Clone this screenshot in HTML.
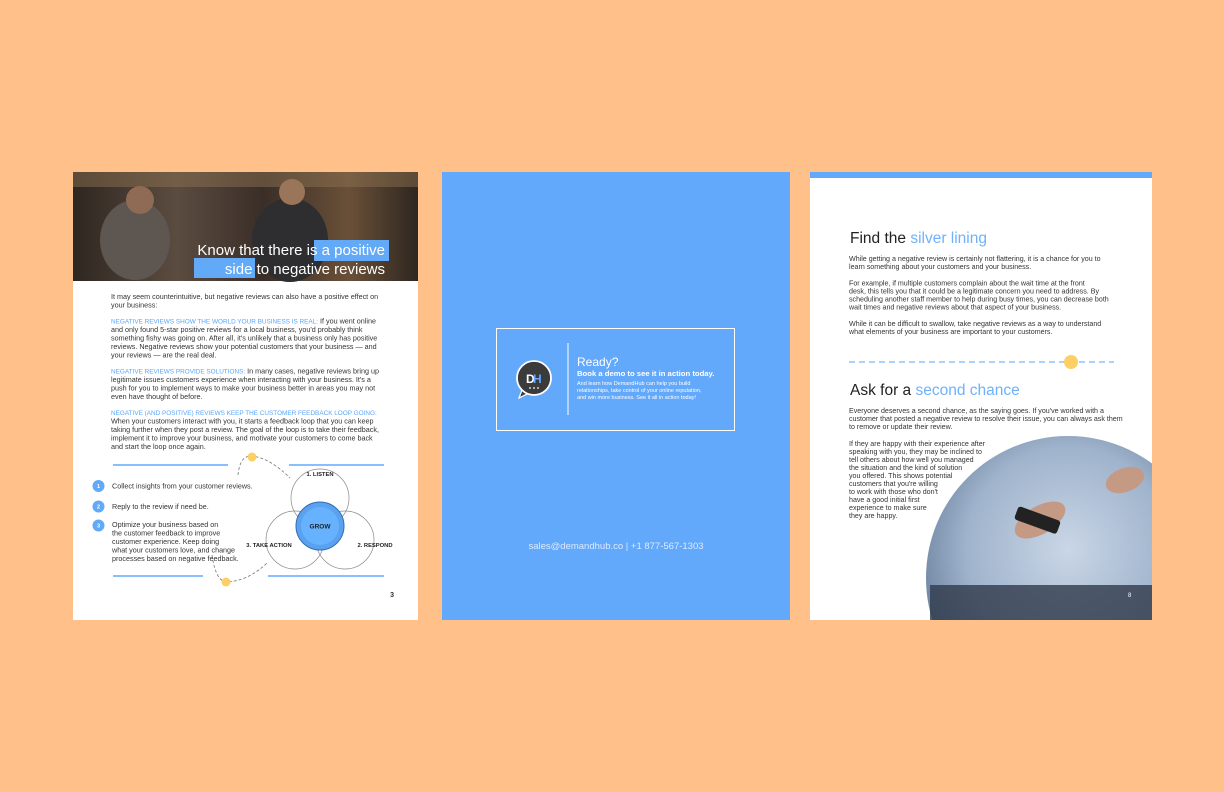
<!DOCTYPE html>
<html><head><meta charset="utf-8"><style>
html,body{margin:0;padding:0;background:#FFC08A;}
svg{display:block}
text{font-family:"Liberation Sans",sans-serif;}
.b{font-size:7.2px;fill:#333}
.r{font-size:7.1px;fill:#333}
.h{fill:#5aa6fb;font-size:6.4px}
</style></head><body>
<svg width="1224" height="792" viewBox="0 0 1224 792" xmlns="http://www.w3.org/2000/svg">
<defs>
<linearGradient id="ph" x1="0" y1="0" x2="1" y2="0">
<stop offset="0" stop-color="#2e2620"/><stop offset="0.3" stop-color="#5b4c40"/><stop offset="0.55" stop-color="#3a2e28"/><stop offset="0.8" stop-color="#6a5038"/><stop offset="1" stop-color="#2e2620"/></linearGradient>
<radialGradient id="hp" cx="0.5" cy="0.4" r="0.6"><stop offset="0" stop-color="#c9d6e6"/><stop offset="0.6" stop-color="#9fb3cc"/><stop offset="1" stop-color="#5f7593"/></radialGradient>
<clipPath id="rp"><rect x="810" y="172" width="342" height="448"/></clipPath>
</defs>
<rect x="0" y="0" width="1224" height="792" fill="#FFC08A"/>

<!-- LEFT PAGE -->
<rect x="73" y="172" width="345" height="448" fill="#fff"/>
<rect x="73" y="172" width="345" height="109" fill="url(#ph)"/>
<rect x="73" y="172" width="345" height="15" fill="#8a7050" opacity="0.5"/>
<ellipse cx="135" cy="240" rx="35" ry="40" fill="#5e5651"/>
<circle cx="140" cy="200" r="14" fill="#8f6a54"/>
<ellipse cx="290" cy="240" rx="38" ry="42" fill="#2e2e30"/>
<circle cx="292" cy="192" r="13" fill="#9a755a"/>
<rect x="314" y="240" width="75" height="21" fill="#62aaf8"/>
<rect x="194" y="258" width="61" height="20" fill="#62aaf8"/>
<text x="385" y="255" font-size="15" fill="#fff" text-anchor="end">Know that there is a positive</text>
<text x="385" y="274" font-size="15" fill="#fff" text-anchor="end">side to negative reviews</text>

<g class="b">
<text x="111" y="299">It may seem counterintuitive, but negative reviews can also have a positive effect on</text>
<text x="111" y="307.5">your business:</text>
<text x="111" y="323.5"><tspan class="h">NEGATIVE REVIEWS SHOW THE WORLD YOUR BUSINESS IS REAL:</tspan> If you went online</text>
<text x="111" y="332">and only found 5-star positive reviews for a local business, you'd probably think</text>
<text x="111" y="340.5">something fishy was going on. After all, it's unlikely that a business only has positive</text>
<text x="111" y="349">reviews. Negative reviews show your potential customers that your business — and</text>
<text x="111" y="357.5">your reviews — are the real deal.</text>
<text x="111" y="373.5"><tspan class="h">NEGATIVE REVIEWS PROVIDE SOLUTIONS:</tspan> In many cases, negative reviews bring up</text>
<text x="111" y="382">legitimate issues customers experience when interacting with your business. It's a</text>
<text x="111" y="390.5">push for you to implement ways to make your business better in areas you may not</text>
<text x="111" y="399">even have thought of before.</text>
<text x="111" y="415"><tspan class="h">NEGATIVE (AND POSITIVE) REVIEWS KEEP THE CUSTOMER FEEDBACK LOOP GOING:</tspan></text>
<text x="111" y="423.5">When your customers interact with you, it starts a feedback loop that you can keep</text>
<text x="111" y="432">taking further when they post a review. The goal of the loop is to take their feedback,</text>
<text x="111" y="440.5">implement it to improve your business, and motivate your customers to come back</text>
<text x="111" y="449">and start the loop once again.</text>
</g>

<line x1="113" y1="465" x2="228" y2="465" stroke="#62aaf8" stroke-width="1.5"/>
<line x1="289" y1="465" x2="384" y2="465" stroke="#62aaf8" stroke-width="1.5"/>
<line x1="113" y1="576" x2="203" y2="576" stroke="#62aaf8" stroke-width="1.5"/>
<line x1="268" y1="576" x2="384" y2="576" stroke="#62aaf8" stroke-width="1.5"/>
<path d="M238 475 Q240 455 252 456 Q270 458 290 478" fill="none" stroke="#777" stroke-width="0.8" stroke-dasharray="3 2"/>
<path d="M212 555 Q216 583 228 582 Q250 580 268 562" fill="none" stroke="#777" stroke-width="0.8" stroke-dasharray="3 2"/>
<circle cx="252" cy="457" r="4.5" fill="#fcd065"/>
<circle cx="226" cy="582" r="4.5" fill="#fcd065"/>
<g fill="none" stroke="#888" stroke-width="0.7">
<circle cx="320" cy="498" r="29"/><circle cx="295" cy="540" r="29"/><circle cx="345" cy="540" r="29"/>
</g>
<circle cx="320" cy="526" r="24" fill="#5aa2f0" stroke="#2f6fb8" stroke-width="1"/>
<circle cx="320" cy="526" r="19" fill="#66b2ff"/>
<text x="320" y="528.5" font-size="6.5" font-weight="bold" text-anchor="middle" fill="#222">GROW</text>
<text x="320" y="476" font-size="5.8" font-weight="bold" text-anchor="middle" fill="#222">1.  LISTEN</text>
<text x="269" y="547" font-size="5.8" font-weight="bold" text-anchor="middle" fill="#222">3.  TAKE ACTION</text>
<text x="375" y="547" font-size="5.8" font-weight="bold" text-anchor="middle" fill="#222">2.  RESPOND</text>

<g font-size="5.5" fill="#fff" text-anchor="middle" font-weight="bold">
<circle cx="98.5" cy="486" r="6" fill="#62aaf8"/><text x="98.5" y="488">1</text>
<circle cx="98.5" cy="506.5" r="6" fill="#62aaf8"/><text x="98.5" y="508.5">2</text>
<circle cx="98.5" cy="525.5" r="6" fill="#62aaf8"/><text x="98.5" y="527.5">3</text>
</g>
<g class="b">
<text x="112" y="488.5">Collect insights from your customer reviews.</text>
<text x="112" y="509">Reply to the review if need be.</text>
<text x="112" y="527">Optimize your business based on</text>
<text x="112" y="535.5">the customer feedback to improve</text>
<text x="112" y="544">customer experience. Keep doing</text>
<text x="112" y="552.5">what your customers love, and change</text>
<text x="112" y="561">processes based on negative feedback.</text>
</g>
<text x="394" y="597" font-size="7" font-weight="bold" fill="#333" text-anchor="end">3</text>

<!-- MIDDLE PAGE -->
<rect x="442" y="172" width="348" height="448" fill="#62a8fb"/>
<rect x="496.5" y="328.5" width="238" height="102" fill="none" stroke="#fff" stroke-width="1"/>
<line x1="568" y1="343" x2="568" y2="415" stroke="#fff" stroke-width="1"/>
<path d="M522 390 L519 398 L529 393 Z" fill="#3b3b3b" stroke="#fff" stroke-width="1.2"/>
<circle cx="534" cy="378" r="17" fill="#3b3b3b" stroke="#fff" stroke-width="1.8"/>
<text x="526" y="383" font-size="12" font-weight="bold" fill="#fff">D</text>
<text x="533" y="383" font-size="12" font-weight="bold" fill="#62a8fb">H</text>
<g fill="#fff"><circle cx="530" cy="388" r="0.9"/><circle cx="534" cy="388" r="0.9"/><circle cx="538" cy="388" r="0.9"/></g>
<text x="577" y="366" font-size="12" fill="#fff">Ready?</text>
<text x="577" y="376" font-size="7.7" fill="#fff" font-weight="bold">Book a demo to see it in action today.</text>
<g font-size="5.5" fill="#fff">
<text x="577" y="385">And learn how DemandHub can help you build</text>
<text x="577" y="392">relationships, take control of your  online reputation,</text>
<text x="577" y="399">and win more business. See it all in action today!</text>
</g>
<text x="616" y="549" font-size="9.5" fill="#dceaff" text-anchor="middle">sales@demandhub.co | +1 877-567-1303</text>

<!-- RIGHT PAGE -->
<rect x="810" y="172" width="342" height="448" fill="#fff"/>
<rect x="810" y="172" width="342" height="6" fill="#62a8fb"/>
<text x="850" y="243" font-size="15.5" fill="#222">Find the <tspan fill="#6fb1fb">silver lining</tspan></text>
<g class="r">
<text x="849" y="261">While getting a negative review is certainly not flattering, it is a chance for you to</text>
<text x="849" y="269">learn something about your customers and your business.</text>
<text x="849" y="285.5">For example, if multiple customers complain about the wait time at the front</text>
<text x="849" y="293.5">desk, this tells you that it could be a legitimate concern you need to address. By</text>
<text x="849" y="301.5">scheduling another staff member to help during busy times, you can decrease both</text>
<text x="849" y="309.5">wait times and negative reviews about that aspect of your business.</text>
<text x="849" y="326">While it can be difficult to swallow, take negative reviews as a way to understand</text>
<text x="849" y="334">what elements of your business are important to your customers.</text>
</g>
<line x1="849" y1="362" x2="1114" y2="362" stroke="#7ab6fb" stroke-width="1.2" stroke-dasharray="6 4"/>
<circle cx="1071" cy="362" r="7" fill="#fcd065"/>
<text x="850" y="395" font-size="15.5" fill="#222">Ask for a <tspan fill="#6fb1fb">second chance</tspan></text>
<g clip-path="url(#rp)">
<circle cx="1068" cy="578" r="142" fill="url(#hp)"/>
<rect x="930" y="585" width="222" height="35" fill="#2f3a4a" opacity="0.8"/>
<ellipse cx="1040" cy="520" rx="28" ry="14" fill="#c49a85" transform="rotate(-30 1040 520)"/>
<rect x="1015" y="513" width="45" height="14" rx="3" fill="#222" transform="rotate(20 1037 520)"/>
<ellipse cx="1125" cy="480" rx="20" ry="12" fill="#c49a85" transform="rotate(-20 1125 480)"/>
</g>
<g class="r">
<text x="849" y="413">Everyone deserves a second chance, as the saying goes. If you've worked with a</text>
<text x="849" y="421">customer that posted a negative review to resolve their issue, you can always ask them</text>
<text x="849" y="429">to remove or update their review.</text>
<text x="849" y="446">If they are happy with their experience after</text>
<text x="849" y="454">speaking with you, they may be inclined to</text>
<text x="849" y="462">tell others about how well you managed</text>
<text x="849" y="470">the situation and the kind of solution</text>
<text x="849" y="478">you offered. This shows potential</text>
<text x="849" y="486">customers that you're willing</text>
<text x="849" y="494">to work with those who don't</text>
<text x="849" y="502">have a good initial first</text>
<text x="849" y="510">experience to make sure</text>
<text x="849" y="518">they are happy.</text>
</g>
<text x="1128" y="597" font-size="6" fill="#fff">8</text>
</svg>
</body></html>
